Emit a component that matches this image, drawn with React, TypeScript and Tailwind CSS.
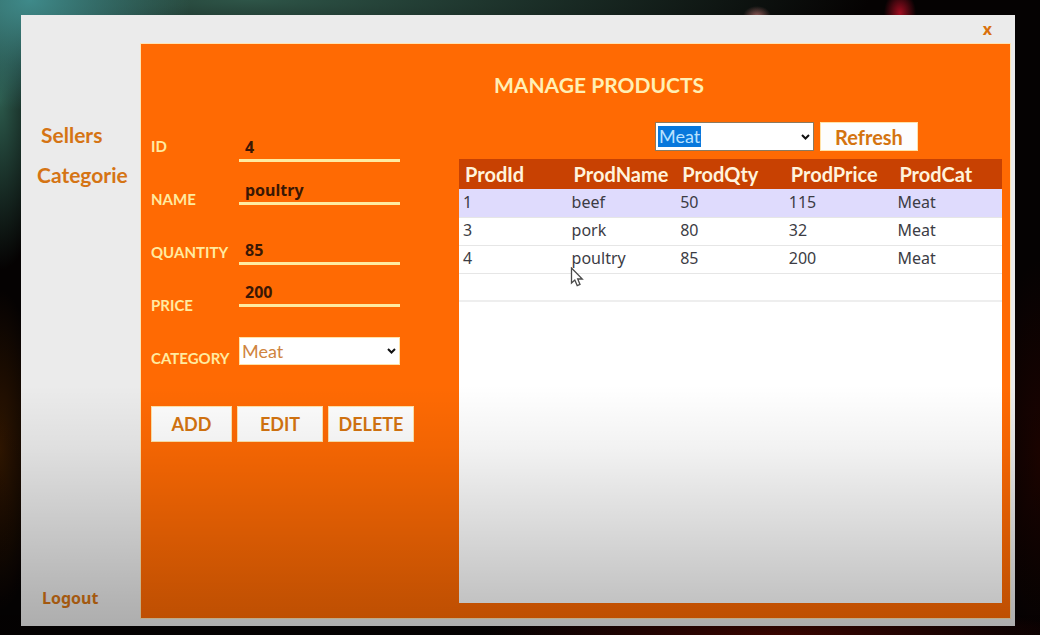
import React, { useState } from "react";

type Product = { id: number; name: string; qty: number; price: number; cat: string };

const products: Product[] = [
  { id: 1, name: "beef", qty: 50, price: 115, cat: "Meat" },
  { id: 3, name: "pork", qty: 80, price: 32, cat: "Meat" },
  { id: 4, name: "poultry", qty: 85, price: 200, cat: "Meat" },
];

const columns = ["ProdId", "ProdName", "ProdQty", "ProdPrice", "ProdCat"];

const fields = [
  { id: "prod-id", label: "ID", value: "4", gap: "" },
  { id: "prod-name", label: "NAME", value: "poultry", gap: "mt-[15px]" },
  { id: "prod-qty", label: "QUANTITY", value: "85", gap: "mt-8" },
  { id: "prod-price", label: "PRICE", value: "200", gap: "mt-[14px]" },
];

const labelClass = "h-5 text-[15px] leading-5 font-bold text-[#ffeba0]";

function Chevron() {
  return (
    <svg
      className="pointer-events-none absolute top-1/2 right-1 h-[6px] w-[9px] -translate-y-1/2"
      viewBox="0 0 9 6"
      fill="none"
      stroke="#111"
      strokeWidth="2"
      aria-hidden="true"
    >
      <path d="M1 1 L4.5 4.5 L8 1" />
    </svg>
  );
}

function Pointer() {
  return (
    <svg
      className="pointer-events-none absolute top-[21px] left-[2px] h-[20px] w-[14px]"
      viewBox="0 0 14 20"
      aria-hidden="true"
    >
      <path
        d="M1.5 1 L1.5 16 L4.8 13 L7.2 18.6 L10 17.4 L7.7 12 L12.3 12 Z"
        fill="#fff"
        stroke="#4a4a4a"
        strokeWidth="1.3"
      />
    </svg>
  );
}

function ActionButton({ children, className }: { children: React.ReactNode; className: string }) {
  return (
    <button
      type="button"
      className={`border border-[#ffe2a8] bg-[#fdfdfd] font-bold text-[#d47410] ${className}`}
    >
      {children}
    </button>
  );
}

export default function App() {
  const [filter, setFilter] = useState("Meat");
  return (
    <div className="relative flex min-h-screen bg-[#050202] bg-[radial-gradient(ellipse_160px_110px_at_30px_0px,#3f8a8a,transparent),radial-gradient(ellipse_620px_70px_at_250px_0px,#2e5548,transparent),radial-gradient(ellipse_50px_170px_at_0px_100px,#2c5a4c,transparent),radial-gradient(ellipse_14px_10px_at_757px_16px,#a05a5a,transparent),radial-gradient(ellipse_16px_22px_at_900px_13px,#a00c20,transparent),radial-gradient(ellipse_40px_160px_at_0px_450px,#301600,transparent),radial-gradient(ellipse_300px_30px_at_780px_635px,#500600,transparent),radial-gradient(ellipse_50px_200px_at_1040px_460px,#1c0300,transparent)] pt-[15px] pr-[25px] pb-[9px] pl-[21px] font-['Lato','Liberation_Sans',sans-serif]">
      <div className="flex flex-1 flex-col bg-[#ebebeb] pr-[5px] pb-2">
        <header className="flex h-[29px] items-center justify-end pr-[18px] pb-[2px]">
          <button
            type="button"
            aria-label="Close"
            className="font-['Noto_Sans',sans-serif] text-base leading-5 font-bold text-[#d9700c]"
          >
            x
          </button>
        </header>
        <div className="flex flex-1">
          <nav className="flex w-[120px] shrink-0 flex-col pt-[79px] text-[21px] leading-6 font-bold text-[#d57414]">
            <a href="#sellers" className="pl-5">
              Sellers
            </a>
            <a href="#categories" className="mt-4 pl-4">
              Categorie
            </a>
            <a
              href="#logout"
              className="mt-auto mb-2 pl-[21px] font-['Noto_Sans',sans-serif] text-base leading-6"
            >
              Logout
            </a>
          </nav>

          <main className="flex flex-1 bg-[#ff6a03] pr-2 pb-[15px] pl-[10px] shadow-[0_0_0_1px_#ffe4b4]">
            <section className="w-[308px] shrink-0 pt-[90px]">
              <form>
                <div className="flex">
                  <div className="flex w-[88px] flex-col gap-[33px] pt-[2px]">
                    {fields.map((f) => (
                      <label key={f.id} htmlFor={f.id} className={labelClass}>
                        {f.label}
                      </label>
                    ))}
                    <label htmlFor="prod-cat" className={labelClass}>
                      CATEGORY
                    </label>
                  </div>
                  <div className="flex w-[161px] flex-col">
                    {fields.map((f) => (
                      <input
                        key={f.id}
                        id={f.id}
                        defaultValue={f.value}
                        className={`h-7 w-full border-b-3 border-[#ffeba0] bg-transparent px-[6px] font-['Noto_Sans',sans-serif] text-base leading-5 font-bold text-[#3a1704] outline-none ${f.gap}`}
                      />
                    ))}
                    <div className="relative mt-[30px]">
                      <select
                        id="prod-cat"
                        defaultValue="Meat"
                        className="block h-7 w-full appearance-none border border-[#ffe2a8] bg-white pl-[2px] text-lg leading-6 text-[#cf8440]"
                      >
                        <option>Meat</option>
                      </select>
                      <Chevron />
                    </div>
                  </div>
                </div>
                <div className="mt-[38px] flex gap-[5px] text-lg">
                  <ActionButton className="h-9 w-[81px]">ADD</ActionButton>
                  <ActionButton className="h-9 w-[86px]">EDIT</ActionButton>
                  <ActionButton className="h-9 w-[86px]">DELETE</ActionButton>
                </div>
              </form>
            </section>

            <section className="flex flex-1 flex-col pt-[27px]">
              <h1 className="pl-[35px] text-[21px] leading-7 font-bold text-[#ffefb5]">
                MANAGE PRODUCTS
              </h1>
              <div className="mt-[23px] flex gap-[6px] pl-[196px]">
                <div className="relative w-[159px]">
                  <select
                    aria-label="Filter by category"
                    value={filter}
                    onChange={(e) => setFilter(e.target.value)}
                    className="block h-[29px] w-full appearance-none border border-[#8a7a60] bg-white bg-[linear-gradient(#0878dc,#0878dc)] bg-[length:43px_21px] bg-[position:2px_3px] bg-no-repeat pb-[2px] pl-[3px] text-lg leading-6 text-[#b9e2ff]"
                  >
                    <option>Meat</option>
                  </select>
                  <Chevron />
                </div>
                <ActionButton className="h-[29px] w-[98px] text-xl leading-6">Refresh</ActionButton>
              </div>
              <div className="mt-2 flex-1 bg-white">
                <table className="w-full table-fixed border-collapse text-left">
                  <thead>
                    <tr className="h-[30px] bg-[#c84102]">
                      {columns.map((c) => (
                        <th
                          key={c}
                          className="p-0 pl-[6px] text-xl leading-6 font-bold whitespace-nowrap text-[#fff3dc]"
                        >
                          {c}
                        </th>
                      ))}
                    </tr>
                  </thead>
                  <tbody className="font-['Noto_Sans',sans-serif] text-base leading-5 text-[#3c3c44]">
                    {products.map((p, i) => (
                      <tr
                        key={p.id}
                        className={`h-7 border-b border-[#e6e6e6] ${i === 0 ? "bg-[#dfdbfd]" : ""}`}
                      >
                        <td className="p-0 pb-[2px] pl-1">{p.id}</td>
                        <td className="relative p-0 pb-[2px] pl-1">
                          {p.name}
                          {p.id === 4 && <Pointer />}
                        </td>
                        <td className="p-0 pb-[2px] pl-1">{p.qty}</td>
                        <td className="p-0 pb-[2px] pl-1">{p.price}</td>
                        <td className="p-0 pb-[2px] pl-1">{p.cat}</td>
                      </tr>
                    ))}
                    <tr className="h-7 border-b-2 border-[#eeeeee]">
                      <td colSpan={5} className="p-0" />
                    </tr>
                  </tbody>
                </table>
              </div>
            </section>
          </main>
        </div>
      </div>
      <div className="pointer-events-none absolute inset-x-0 bottom-0 h-[250px] bg-[linear-gradient(to_bottom,transparent,rgba(0,0,0,0.05)_25%,rgba(0,0,0,0.23)_85%,rgba(0,0,0,0.27))]" />
    </div>
  );
}
